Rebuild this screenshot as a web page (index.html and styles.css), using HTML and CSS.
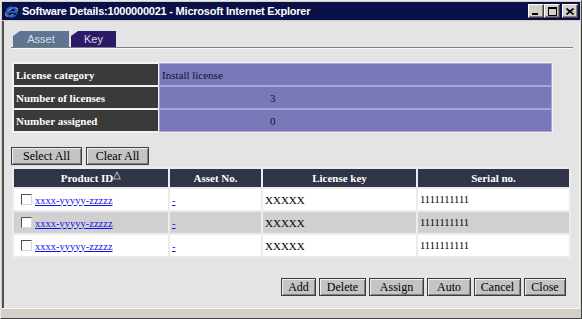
FILE: index.html
```html
<!DOCTYPE html>
<html lang="en">
<head>
    <title>Software Details</title>
    <link rel="stylesheet" href="styles.css">
</head>
<body>
    <div class="window">

        <div class="titlebar">
            <svg class="ie-icon" width="15" height="15" viewBox="0 0 15 15">
                <ellipse cx="7.5" cy="8" rx="6.5" ry="3" fill="none" stroke="#f0b030" stroke-width="1.2" transform="rotate(-30 7.5 8)"/>
                <circle cx="7.5" cy="8" r="4.6" fill="none" stroke="#1e5fd8" stroke-width="2.4"/>
                <rect x="4" y="7" width="7.5" height="1.8" fill="#1e5fd8"/>
                <rect x="9" y="9.2" width="3" height="1.6" fill="#0b1a4a"/>
            </svg>
            <span class="title">Software Details:1000000021 - Microsoft Internet Explorer</span>
            <div class="controls">
                <span class="ctl">
                    <svg width="8" height="7" viewBox="0 0 8 7"><rect x="0" y="5" width="6" height="2" fill="#000"/></svg>
                </span>
                <span class="ctl">
                    <svg width="9" height="9" viewBox="0 0 9 9"><rect x="0.5" y="0.5" width="8" height="8" fill="none" stroke="#000"/><rect x="0" y="0" width="9" height="2" fill="#000"/></svg>
                </span>
                <span class="ctl ctl-close">
                    <svg width="8" height="7" viewBox="0 0 8 7"><path d="M0.5 0.5 L7.5 6.5 M7.5 0.5 L0.5 6.5" stroke="#000" stroke-width="1.6"/></svg>
                </span>
            </div>
        </div>

        <div class="client">
            <div class="tabs">
                <span class="tab tab-asset">Asset</span>
                <span class="tab tab-key">Key</span>
            </div>

            <table class="info">
                <tr>
                    <th>License category</th>
                    <td>Install license</td>
                </tr>
                <tr>
                    <th>Number of licenses</th>
                    <td class="num">3</td>
                </tr>
                <tr>
                    <th>Number assigned</th>
                    <td class="num">0</td>
                </tr>
            </table>

            <div class="select-row">
                <button class="btn btn-select">Select All</button>
                <button class="btn btn-clear">Clear All</button>
            </div>

            <table class="grid">
                <tr>
                    <th class="col-id">Product ID<span class="sort">&#9651;</span></th>
                    <th class="col-asset">Asset No.</th>
                    <th class="col-key">License key</th>
                    <th>Serial no.</th>
                </tr>
                <tr>
                    <td><span class="check"></span><a href="#">xxxx-yyyyy-zzzzz</a></td>
                    <td><a href="#">-</a></td>
                    <td class="key">XXXXX</td>
                    <td class="serial">1111111111</td>
                </tr>
                <tr class="alt">
                    <td><span class="check"></span><a href="#">xxxx-yyyyy-zzzzz</a></td>
                    <td><a href="#">-</a></td>
                    <td class="key">XXXXX</td>
                    <td class="serial">1111111111</td>
                </tr>
                <tr>
                    <td><span class="check"></span><a href="#">xxxx-yyyyy-zzzzz</a></td>
                    <td><a href="#">-</a></td>
                    <td class="key">XXXXX</td>
                    <td class="serial">1111111111</td>
                </tr>
            </table>

            <div class="actions">
                <button class="btn btn-add">Add</button>
                <button class="btn btn-delete">Delete</button>
                <button class="btn btn-assign">Assign</button>
                <button class="btn btn-auto">Auto</button>
                <button class="btn btn-cancel">Cancel</button>
                <button class="btn btn-close">Close</button>
            </div>
        </div>

        <div class="statusline"></div>
    </div>
</body>
</html>
```

FILE: styles.css
```css
body {
    margin: 0;
    background-color: #d4d0c8;
}

.window {
    box-sizing: border-box;
    width: 582px;
    height: 319px;
    display: flex;
    flex-direction: column;
    padding: 1px;
    background-color: #d4d0c8;
    border: 1px solid;
    border-color: #e8e8e8 #404040 #404040 #e8e8e8;
}

.titlebar {
    height: 18px;
    display: flex;
    align-items: center;
    padding-left: 2px;
    background-color: #0a1048;
}

.ie-icon {
    flex-shrink: 0;
}

.title {
    margin-left: 3px;
    color: #ffffff;
    font-family: "Liberation Sans", Arial, sans-serif;
    font-weight: bold;
    font-size: 11px;
    letter-spacing: -0.22px;
    white-space: nowrap;
}

.controls {
    margin-left: auto;
    margin-right: 2px;
    display: flex;
}

.ctl {
    box-sizing: border-box;
    width: 16px;
    height: 14px;
    display: flex;
    align-items: center;
    justify-content: center;
    background-color: #d4d0c8;
    border: 1px solid;
    border-color: #ffffff #404040 #404040 #ffffff;
    box-shadow: inset -1px -1px #808080;
}

.ctl-close {
    margin-left: 2px;
}

.client {
    flex: 1;
    margin-top: 1px;
    padding: 10px 6px 0 0;
    background-color: #e4e4e4;
    border-left: 2px solid;
    border-right: 1px solid;
    border-color: #505050 #f4f4f4 #505050 #505050;
}

.tabs {
    display: flex;
    gap: 2px;
    margin-left: 7px;
    padding-left: 2px;
    border-bottom: 1px solid #7c7c7c;
    box-shadow: 0 1px #f8f8f8;
}

.tab {
    height: 16px;
    display: flex;
    align-items: center;
    justify-content: center;
    font-family: "Liberation Sans", Arial, sans-serif;
    font-size: 11px;
    color: #dcdce6;
    clip-path: polygon(0 100%, 0 5px, 7px 0, 100% 0, 100% 100%);
}

.tab-asset {
    width: 56px;
    background-color: #5d7590;
}

.tab-key {
    width: 45px;
    background-color: #2c1a68;
}

.info {
    margin: 14px 0 0 8px;
    width: 541px;
    border-spacing: 2px;
    background-color: #f2f2f2;
    font-family: "Liberation Serif", "Times New Roman", serif;
    font-size: 11px;
}

.info tr {
    height: 21px;
}

.info th {
    width: 140px;
    padding: 0 2px;
    text-align: left;
    color: #ffffff;
    background-color: #3a3a3a;
}

.info td {
    padding: 0 2px;
    color: #10103a;
    background-color: #7a78b8;
    box-shadow: 0 0 0 1px #a8a6d6;
}

.info td.num {
    padding-left: 110px;
}

.select-row {
    display: flex;
    gap: 4px;
    margin: 14px 0 0 7px;
}

.btn {
    box-sizing: border-box;
    height: 18px;
    padding: 0;
    font-family: "Liberation Serif", "Times New Roman", serif;
    font-size: 12px;
    font-weight: normal;
    color: #000000;
    background-color: #c4c4c4;
    border: 1px solid #3c3c3c;
    box-shadow: inset 1px 1px #f0f0f0, inset -1px -1px #808080;
}

.btn-select { width: 71px; }
.btn-clear { width: 63px; }
.btn-add { width: 35px; }
.btn-delete { width: 47px; }
.btn-assign { width: 55px; }
.btn-auto { width: 44px; }
.btn-cancel { width: 47px; }
.btn-close { width: 42px; }

.grid {
    margin: 2px 0 0 8px;
    width: 559px;
    border-spacing: 2px;
    background-color: #ececec;
    font-family: "Liberation Serif", "Times New Roman", serif;
    font-size: 11px;
}

.grid th {
    height: 18px;
    padding: 0;
    color: #ffffff;
    background-color: #2f3447;
    font-weight: bold;
}

.col-id {
    width: 154px;
}

.col-asset {
    width: 91px;
}

.col-key {
    width: 153px;
}

.sort {
    position: relative;
    top: -4px;
    font-size: 10px;
    font-weight: normal;
}

.grid td {
    height: 21px;
    padding: 0 2px;
    background-color: #ffffff;
    white-space: nowrap;
}

.grid tr.alt td {
    background-color: #d0d0d0;
}

.grid a {
    color: #1010ee;
    font-size: 10.5px;
}

.check {
    display: inline-block;
    width: 9px;
    height: 9px;
    margin: 0 3px 0 5px;
    vertical-align: -1px;
    background-color: #ffffff;
    border: 1px solid;
    border-color: #505050 #d8d8d8 #d8d8d8 #505050;
}

.key {
    font-size: 11px;
}

.serial {
    font-size: 10.5px;
}

.actions {
    display: flex;
    justify-content: flex-end;
    gap: 3px;
    margin-top: 20px;
    padding-right: 7px;
}

.statusline {
    height: 8px;
    border-top: 1px solid #f8f8f8;
    background-color: #d4d0c8;
}
```
